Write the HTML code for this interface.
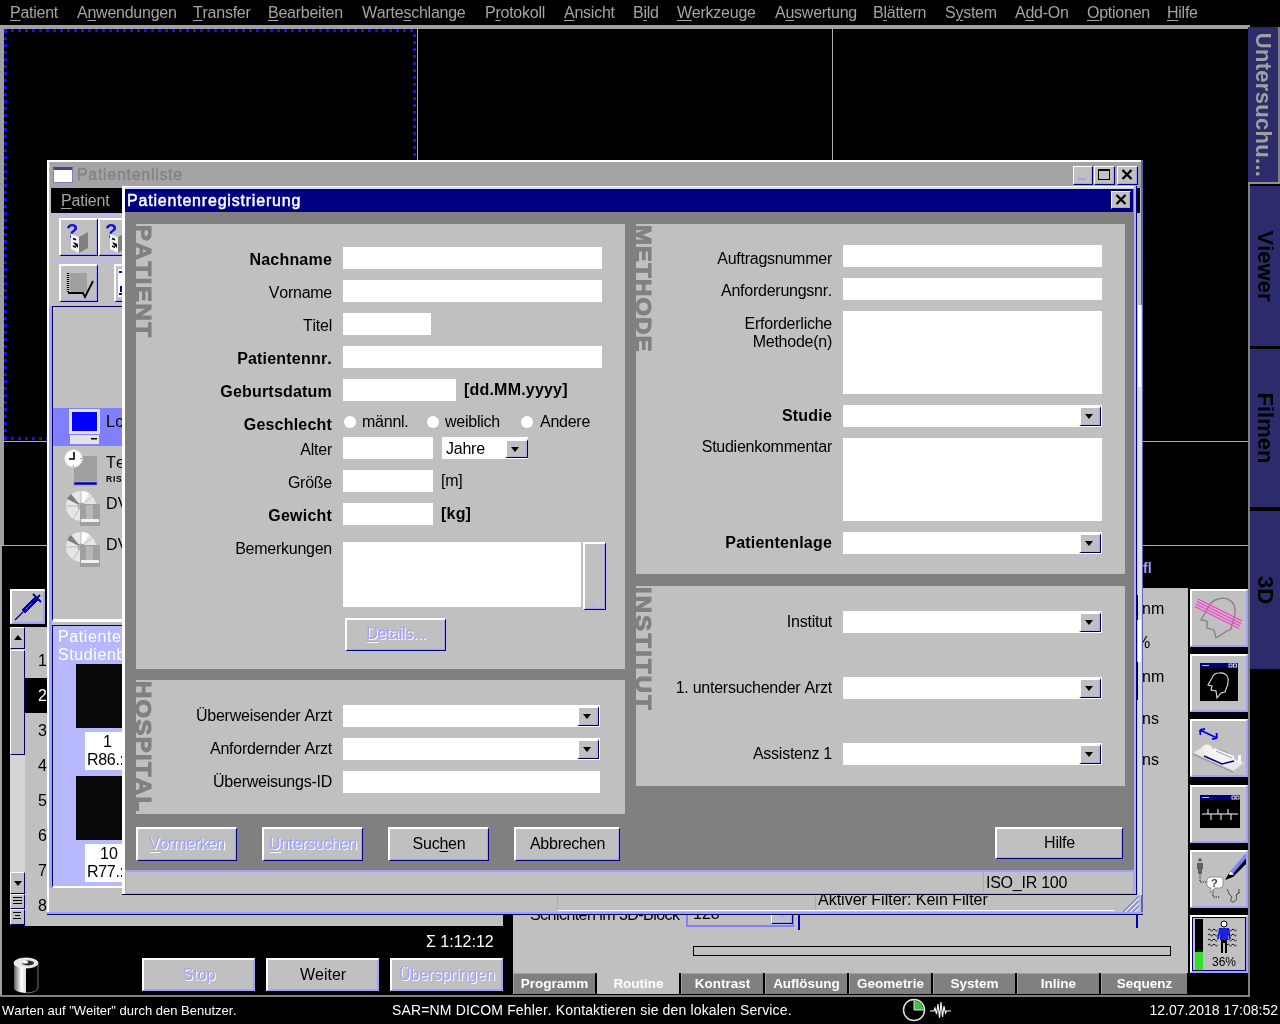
<!DOCTYPE html>
<html lang="de">
<head>
<meta charset="utf-8">
<title>Patientenregistrierung</title>
<style>
*{box-sizing:border-box;margin:0;padding:0}
html,body{width:1280px;height:1024px;overflow:hidden;background:#000}
body{position:relative;font-family:"Liberation Sans",sans-serif;font-size:16px;color:#000;line-height:1;font-kerning:none}
.a{position:absolute}
u{text-decoration:underline;text-underline-offset:2px;text-decoration-thickness:1px}
/* ---------- base app ---------- */
#dlg{letter-spacing:-0.25px}
#dlg,#plist,#base2,#menu{will-change:transform}
#dlg .b{letter-spacing:0.2px}
#menu{left:0;top:0;width:1280px;height:25px;background:#000;color:#a4a4a4;font-size:16px}
#menu span{position:absolute;top:5px;white-space:nowrap;letter-spacing:-0.25px}
.ln{background:#808080}
/* ---------- generic win controls ---------- */
.btn{background:#c0c0c0;border-top:2px solid #fff;border-left:2px solid #fff;border-right:1px solid #000080;border-bottom:1px solid #000080;box-shadow:inset -1px -1px 0 #a0a0ff;text-align:center;white-space:nowrap}
.dis{color:#a0a0ff;text-shadow:1px 1px 0 #fff}
.inp{background:#fff}
.lbl{text-align:right;white-space:nowrap;font-size:16px;letter-spacing:-0.25px;padding-right:0}
.lbl.b{letter-spacing:0.2px}
.b{font-weight:bold}
.dd{background:#c0c0c0;border-top:2px solid #fff;border-left:2px solid #fff;border-right:1px solid #000040;border-bottom:1px solid #000040;box-shadow:inset -2px -1px 0 #b0b0e8}
.dd:after{content:"";position:absolute;left:4px;top:6px;border:4.5px solid transparent;border-top:5px solid #000;border-bottom:0}
.vtab{left:1250px;width:30px;background:#2c2c6c;color:#000;font-weight:bold;font-size:22px}
.vtab span{position:absolute;left:50%;top:50%;white-space:nowrap;transform:translate(-50%,-50%) rotate(90deg)}
.ib{background:#c0c0c0;border:2px solid;border-color:#fff #a0a0ff #a0a0ff #fff}
.sb{background:#c0c0c0;border:1px solid;border-color:#fff #000060 #000060 #fff}
.sb i{position:absolute;left:3px;border:4px solid transparent}
.sb b{position:absolute;left:2px;width:9px;height:1px;background:#000}
.qn{left:25px;width:22px;text-align:right;font-size:16px}
.qb{top:958px;width:113px;height:33px;line-height:30px;border-color:#fff #a0a0ff #a0a0ff #fff}
.pu{left:1142px;font-size:16px}
.tb{top:0;height:21px;background:#808080;color:#fff;font-weight:bold;font-size:13.5px;text-align:center;line-height:19px;border-top:1px solid #a0a0a0;border-left:1px solid #a0a0a0}
.tb.on{background:#c0c0c0;border-color:#c0c0c0}
.tl{font-size:16px;white-space:nowrap;letter-spacing:0.3px}
.vt{transform-origin:0 0;transform:rotate(90deg) scaleX(1.08);white-space:nowrap;font-weight:bold;color:#808080;-webkit-text-stroke:1.1px #808080}
</style>
</head>
<body>
<!-- ================= BASE APPLICATION ================= -->
<div id="menu" class="a">
<span style="left:10px"><u>P</u>atient</span>
<span style="left:77px">A<u>n</u>wendungen</span>
<span style="left:193px"><u>T</u>ransfer</span>
<span style="left:268px"><u>B</u>earbeiten</span>
<span style="left:362px">Warte<u>s</u>chlange</span>
<span style="left:485px">P<u>r</u>otokoll</span>
<span style="left:564px"><u>A</u>nsicht</span>
<span style="left:633px">B<u>i</u>ld</span>
<span style="left:677px"><u>W</u>erkzeuge</span>
<span style="left:775px">A<u>u</u>swertung</span>
<span style="left:873px">B<u>l</u>ättern</span>
<span style="left:945px">S<u>y</u>stem</span>
<span style="left:1015px">A<u>d</u>d-On</span>
<span style="left:1087px"><u>O</u>ptionen</span>
<span style="left:1167px"><u>H</u>ilfe</span>
</div>
<div class="a" style="left:0;top:25px;width:1250px;height:4px;background:#a0a0a0"></div>
<div class="a" style="left:0;top:28px;width:4px;height:517px;background:#a0a0a0"></div><div class="a" style="left:0;top:545px;width:2px;height:450px;background:#a0a0a0"></div>
<!-- segment grid -->
<div class="a" style="left:417px;top:29px;width:1px;height:516px;background:#b0b0b0"></div>
<div class="a" style="left:832px;top:29px;width:1px;height:516px;background:#b0b0b0"></div>
<div class="a" style="left:4px;top:441px;width:1244px;height:1px;background:#b0b0b0"></div>
<div class="a" style="left:0;top:545px;width:1248px;height:1px;background:#b0b0b0"></div>
<div class="a" style="left:4px;top:29px;width:413px;height:3px;background:repeating-linear-gradient(90deg,#1010f0 0 3px,transparent 3px 7px)"></div>
<div class="a" style="left:4px;top:437px;width:413px;height:3px;background:repeating-linear-gradient(90deg,#1010f0 0 3px,transparent 3px 7px)"></div>
<div class="a" style="left:4px;top:30px;width:3px;height:409px;background:repeating-linear-gradient(180deg,#1010f0 0 3px,transparent 3px 7px)"></div>
<div class="a" style="left:413px;top:34px;width:3px;height:405px;background:repeating-linear-gradient(180deg,#1010f0 0 3px,transparent 3px 7px)"></div>

<!-- LAYERS -->
<div id="base2">
<!-- right tabs -->
<div class="a ln" style="left:1248px;top:182px;width:2px;height:815px"></div>
<div class="a vtab" style="left:1248px;width:32px;top:27px;height:155px;background:#2c2c6a;color:#a0a0a0;border-right:2px solid #808080"><span style="letter-spacing:0.3px">Untersuchu...</span></div>
<div class="a" style="left:1248px;top:182px;width:32px;height:2px;background:#909090"></div>
<div class="a vtab" style="top:186px;height:160px"><span>Viewer</span></div>
<div class="a vtab" style="top:349px;height:158px"><span>Filmen</span></div>
<div class="a vtab" style="top:511px;height:158px"><span>3D</span></div>
<!-- exam queue (lower-left) -->
<div class="a btn" style="left:10px;top:589px;width:35px;height:35px;border-color:#fff #a0a0ff #a0a0ff #fff"><svg class="a" style="left:0;top:0" width="32" height="32" viewBox="0 0 32 32"><path d="M3 29 L11 21" stroke="#000080" stroke-width="1.2"/><path d="M10 19 L23 6 L26 9 L13 22 Z" fill="#0000c0" stroke="#000080" stroke-width="1"/><path d="M21 3 L29 11 M25 7 L28 4" stroke="#000080" stroke-width="1.8"/><path d="M14 18 L20 12" stroke="#c0c0ff" stroke-width="1" stroke-dasharray="1 1"/></svg></div>
<div class="a" style="left:25px;top:627px;width:478px;height:299px;background:#c0c0c0"></div>
<div class="a" style="left:10px;top:627px;width:15px;height:267px;background:#d4d4d4"></div>
<div class="a sb" style="left:10px;top:627px;width:15px;height:22px"><i style="border-bottom:5px solid #000;border-top:0;top:7px"></i></div>
<div class="a sb" style="left:10px;top:650px;width:15px;height:105px"></div>
<div class="a sb" style="left:10px;top:872px;width:15px;height:22px"><i style="border-top:5px solid #000;border-bottom:0;top:8px"></i></div>
<div class="a sb" style="left:10px;top:894px;width:15px;height:15px"><b style="top:2px"></b><b style="top:5px"></b><b style="top:8px"></b></div>
<div class="a sb" style="left:10px;top:909px;width:15px;height:16px"><b style="top:2px;width:8px"></b><b style="top:5px;width:5px;left:4px"></b><b style="top:8px;width:8px"></b></div>
<div class="a" style="left:25px;top:678px;width:22px;height:35px;background:#000"></div>
<div class="a qn" style="top:653px">1</div><div class="a qn" style="top:688px;color:#fff">2</div><div class="a qn" style="top:723px">3</div><div class="a qn" style="top:758px">4</div><div class="a qn" style="top:793px">5</div><div class="a qn" style="top:828px">6</div><div class="a qn" style="top:863px">7</div><div class="a qn" style="top:898px">8</div>
<div class="a" style="left:426px;top:934px;color:#fff;white-space:nowrap">Σ 1:12:12</div>
<svg class="a" style="left:12px;top:955px" width="28" height="40" viewBox="0 0 28 40"><defs><linearGradient id="cg" x1="0" x2="1"><stop offset="0" stop-color="#606060"/><stop offset="0.3" stop-color="#fff"/><stop offset="0.55" stop-color="#d0d0d0"/><stop offset="0.7" stop-color="#303030"/><stop offset="1" stop-color="#000"/></linearGradient></defs><path d="M2 8 V33 A12 5 0 0 0 26 33 V8 Z" fill="url(#cg)"/><path d="M14 13 H26 V33 A12 5 0 0 1 14 38 Z" fill="#000"/><path d="M26 8 V33 A12 5 0 0 1 14 38" fill="none" stroke="#909090" stroke-width="0.8"/><ellipse cx="14" cy="8" rx="12" ry="5" fill="#e8e8e8" stroke="#fff" stroke-width="0.8"/><ellipse cx="16" cy="8" rx="6" ry="2.5" fill="#303030"/><ellipse cx="13" cy="7" rx="3" ry="1.5" fill="#fff"/></svg>
<div class="a btn dis qb" style="left:142px">Stop</div>
<div class="a btn qb" style="left:266px">Weiter</div>
<div class="a btn dis qb" style="left:390px">Überspringen</div>
<!-- parameter card (lower-right) -->
<div class="a" style="left:1143px;top:561px;color:#a0a0ff;font-weight:bold;font-size:14px">fl</div>
<div class="a" style="left:513px;top:588px;width:675px;height:385px;background:#c0c0c0"></div>
<div class="a pu" style="top:601px">nm</div><div class="a pu" style="top:635px;left:1136px">%</div><div class="a pu" style="top:669px">nm</div><div class="a pu" style="top:711px">ns</div><div class="a pu" style="top:752px">ns</div>
<div class="a" style="left:530px;top:907px;white-space:nowrap;letter-spacing:-0.55px">Schichten im 3D-Block</div>
<div class="a" style="left:686px;top:900px;width:108px;height:27px;border:2px solid #8080ff;border-top:0"><span class="a" style="left:5px;top:6px">128</span><div class="a btn" style="left:83px;top:3px;width:22px;height:21px;border-width:1px"><div class="a" style="left:7px;top:12px;width:5px;height:1px;background:#a0a0ff"></div></div></div>
<div class="a" style="left:798px;top:914px;width:2px;height:16px;background:#0000c0"></div>
<div class="a" style="left:1136px;top:914px;width:2px;height:14px;background:#0000c0"></div>
<div class="a" style="left:693px;top:946px;width:478px;height:10px;border:1px solid #000"></div>
<div class="a tabs" style="left:513px;top:973px;width:675px;height:22px;background:#000">
<div class="a tb" style="left:0;width:82px">Programm</div>
<div class="a tb on" style="left:84px;width:82px">Routine</div>
<div class="a tb" style="left:168px;width:82px">Kontrast</div>
<div class="a tb" style="left:252px;width:82px">Auflösung</div>
<div class="a tb" style="left:336px;width:82px">Geometrie</div>
<div class="a tb" style="left:420px;width:82px">System</div>
<div class="a tb" style="left:504px;width:82px">Inline</div>
<div class="a tb" style="left:588px;width:86px">Sequenz</div>
</div>
<!-- right icon column -->
<div class="a ib" style="left:1190px;top:589px;width:58px;height:58px"><svg class="a" style="left:0;top:0" width="54" height="54" viewBox="0 0 54 54"><path d="M26 8 C36 5 44 11 43 22 C43 28 40 31 39 38 L35 40 L24 47 L22 39 L15 37 L15 30 L9 29 L17 15 C19 11 22 9 26 8 Z" fill="none" stroke="#808080" stroke-width="1.3"/><g stroke="#ff38d8" stroke-width="1.3"><path d="M6 8 L50 30 M5 10.5 L49 32.5 M4 13 L48 35 M3 15.5 L47 37.5"/></g></svg></div>
<div class="a ib" style="left:1190px;top:654px;width:58px;height:58px"><svg class="a" style="left:0;top:0" width="54" height="54" viewBox="0 0 54 54"><rect x="8" y="7" width="38" height="38" fill="#000"/><rect x="8" y="7" width="38" height="5" fill="#000080"/><rect x="10" y="9" width="7" height="1" fill="#c0c0ff"/><rect x="37" y="8" width="3" height="3" fill="none" stroke="#fff" stroke-width="0.8"/><rect x="41.5" y="8" width="3" height="3" fill="none" stroke="#fff" stroke-width="0.8"/><path d="M27 17 C33 16 37 20 36 26 C36 30 34 32 33 36 L29 37 L25 42 L24 35 L19 34 L20 30 L16 29 L20 22 C21 19 24 17 27 17 Z" fill="none" stroke="#e0e0e0" stroke-width="1.1"/></svg></div>
<div class="a ib" style="left:1190px;top:719px;width:58px;height:58px"><svg class="a" style="left:0;top:0" width="54" height="54" viewBox="0 0 54 54"><path d="M8 9 L25 17 M8 9 L8.5 14 M8 9 L13 8 M25 17 L20 18 M25 17 L24.5 12" stroke="#0000e0" stroke-width="1.8" fill="none"/><path d="M1 32 L12 25 L52 42 L41 50 Z" fill="#e8e8e8"/><path d="M1 32 L41 50 L41 52 L1 34 Z" fill="#a0a0a0"/><ellipse cx="15" cy="27" rx="5" ry="3.5" fill="#f0f0f0"/><path d="M12 33 L22 27 L42 35 L42 41 L32 44 L12 36 Z" fill="#f4f4f4"/><path d="M12 35 L30 43 L42 40" stroke="#000080" stroke-width="1.5" fill="none"/><path d="M24 30 L40 37 M27 28 L36 32" stroke="#a0a0a0" stroke-width="1"/><rect x="46" y="34" width="3" height="8" fill="#f8f8f8"/></svg></div>
<div class="a ib" style="left:1190px;top:785px;width:58px;height:58px"><svg class="a" style="left:0;top:0" width="54" height="54" viewBox="0 0 54 54"><g transform="translate(0,2)"><rect x="8" y="6" width="40" height="33" fill="#000"/><rect x="8" y="6" width="40" height="5" fill="#000080"/><rect x="10" y="8" width="7" height="1" fill="#c0c0ff"/><rect x="40" y="7" width="3" height="3" fill="none" stroke="#fff" stroke-width="0.8"/><rect x="44" y="7" width="3" height="3" fill="none" stroke="#fff" stroke-width="0.8"/><path d="M10 25 H16 V20 M16 25 H19 V31 M19 25 H26 V20 M26 25 H29 V31 M29 25 H36 V20 M36 25 H39 V31 M39 25 H46" stroke="#fff" stroke-width="1" fill="none"/></g></svg></div>
<div class="a ib" style="left:1190px;top:850px;width:58px;height:58px"><svg class="a" style="left:0;top:0" width="54" height="54" viewBox="0 0 54 54"><circle cx="8" cy="8" r="1.8" fill="#606060"/><path d="M5 11 H11 V17 H10 V22 H6 V17 H5 Z" fill="#606060"/><path d="M8 23 V30 H15 M21 38 V45 H28" stroke="#000" stroke-width="1" stroke-dasharray="1.2 1.2" fill="none"/><path d="M19 25 H28 Q31 25 31 28 V33 Q31 36 28 36 H23 L18 41 L19 36 Q15 36 15 33 V28 Q15 25 19 25 Z" fill="#fff" stroke="#808080" stroke-width="0.8"/><text x="19" y="34.5" font-family="Liberation Sans" font-weight="bold" font-size="11" fill="#404040">?</text><path d="M33 28 L37 21 L55 3 L58 8 L41 25 Z" fill="#000"/><path d="M37 21 L53 2 L56 4 L40 23 Z" fill="#8080ff"/><path d="M36.5 22.5 L38.5 19.5 L42 23 Z" fill="#fff"/><path d="M35 37 Q37 43 40 45 Q37 50 41 50 Q46 49 44 43 Q48 41 47 37 M44 43 L48 40" stroke="#404040" stroke-width="0.9" fill="none"/></svg></div>
<div class="a ib" style="left:1190px;top:915px;width:58px;height:58px"><svg class="a" style="left:0;top:0" width="54" height="54" viewBox="0 0 54 54"><rect x="0.5" y="0.5" width="53" height="53" fill="none" stroke="#000060" stroke-width="1"/><rect x="3" y="2" width="8" height="51" fill="#000"/><rect x="3" y="35" width="8" height="18" fill="#30e030"/><circle cx="32" cy="7" r="3" fill="#fff" stroke="#000" stroke-width="1"/><path d="M27 11 H37 L39 22 L37 22 L36 16 V23 H28 V16 L27 22 L25 22 Z" fill="#2020e0"/><path d="M29 23 H35 V36 H33 V26 H31 V36 H29 Z" fill="#000"/><path d="M16 13 q1.2 -2 2.4 0 t2.4 0 t2.4 0 t2.4 0 M35 13 q1.2 -2 2.4 0 t2.4 0 t2.4 0 t2.4 0 M16 18 q1.2 -2 2.4 0 t2.4 0 t2.4 0 t2.4 0 M35 18 q1.2 -2 2.4 0 t2.4 0 t2.4 0 t2.4 0 M16 23 q1.2 -2 2.4 0 t2.4 0 t2.4 0 t2.4 0 M35 23 q1.2 -2 2.4 0 t2.4 0 t2.4 0 t2.4 0 M16 28 q1.2 -2 2.4 0 t2.4 0 t2.4 0 t2.4 0 M35 28 q1.2 -2 2.4 0 t2.4 0 t2.4 0 t2.4 0" stroke="#000" stroke-width="0.9" fill="none"/><text x="20" y="49" font-family="Liberation Sans" font-size="12" fill="#000">36%</text></svg></div>

<!-- status bar -->
<div class="a ln" style="left:0;top:995px;width:1250px;height:2px"></div>
<div class="a" style="left:0;top:997px;width:1280px;height:27px;background:#000;color:#fff;font-size:14px">
<span class="a" style="left:2px;top:7px;font-size:13px;white-space:nowrap">Warten auf "Weiter" durch den Benutzer.</span>
<span class="a" style="left:392px;top:6px;white-space:nowrap;letter-spacing:0.15px">SAR=NM DICOM Fehler. Kontaktieren sie den lokalen Service.</span>
<svg class="a" style="left:901px;top:0" width="52" height="27" viewBox="0 0 52 27"><circle cx="13" cy="13" r="10.5" fill="#000" stroke="#e0e0e0" stroke-width="1.5"/><path d="M13 13 V3.5 A9.5 9.5 0 0 1 22.5 13 Z" fill="#40c040"/><path d="M13 3 V13 H23" stroke="#e0e0e0" stroke-width="1" fill="none"/><path d="M29 14 H33 L34 11 L35.5 17 L37 7 L38.5 21 L40 5 L41.5 20 L43 9 L44.5 16 L45.5 14 H50" stroke="#fff" stroke-width="1.1" fill="none"/></svg>
<span class="a" style="right:2px;top:6px;white-space:nowrap">12.07.2018 17:08:52</span>
</div>
</div>
<div id="plist" class="a" style="left:47px;top:160px;width:1096px;height:755px;background:#c0c0c0">
<div class="a" style="left:0;top:0;width:1096px;height:2px;background:#fff"></div>
<div class="a" style="left:0;top:0;width:2px;height:754px;background:#fff"></div>
<div class="a" style="left:2px;top:146px;width:3px;height:582px;background:#a0a0ff"></div><div class="a" style="left:4px;top:53px;width:1px;height:93px;background:#b8b8ff"></div>
<div class="a" style="left:1094px;top:0;width:2px;height:754px;background:#6060b0"></div>
<div class="a" style="left:0;top:752px;width:1096px;height:2px;background:#a0a0ff"></div>
<div class="a" style="left:0;top:754px;width:1096px;height:1px;background:#000060"></div>
<!-- title bar (inactive) -->
<div class="a" style="left:3px;top:2px;width:1091px;height:26px;background:#a4a4a4"></div>
<div class="a" style="left:6px;top:7px;width:20px;height:16px;background:#fff;border:1px solid #8080c0;border-top:3px solid #4040a0;border-radius:1px"></div>
<div class="a" style="left:30px;top:7px;color:#848484;white-space:nowrap;letter-spacing:0.7px;-webkit-text-stroke:0.45px #848484">Patientenliste</div>
<div class="a btn" style="left:1026px;top:6px;width:20px;height:19px;border-width:1px"><div class="a" style="left:4px;top:11px;width:8px;height:2px;background:#a0a0ff"></div></div>
<div class="a btn" style="left:1047px;top:6px;width:21px;height:19px;border-width:1px"><div class="a" style="left:3px;top:2px;width:12px;height:11px;border:1px solid #000;border-top-width:2px"></div></div>
<div class="a btn" style="left:1070px;top:6px;width:21px;height:19px;border-width:1px"><svg class="a" style="left:3px;top:2px" width="12" height="11" viewBox="0 0 12 11"><path d="M1.5 1 L10.5 10 M10.5 1 L1.5 10" stroke="#000" stroke-width="2.2" fill="none"/></svg></div>
<!-- menu -->
<div class="a" style="left:4px;top:28px;width:1089px;height:25px;background:#000;color:#a4a4a4"><span class="a" style="left:10px;top:5px;letter-spacing:-0.2px"><u>P</u>atient</span></div>
<!-- toolbar -->
<div class="a" style="left:5px;top:54px;width:1087px;height:1px;background:#b8b8ff"></div>
<div class="a btn" style="left:12px;top:58px;width:39px;height:38px" id="tb1"><svg class="a" style="left:0;top:0" width="35" height="34" viewBox="0 0 35 34"><text x="5" y="18" font-family="Liberation Sans" font-weight="bold" font-size="20" fill="#1010e0">?</text><path d="M10 14 L18 17 L18 33 L10 29 Z" fill="#f4f4f4"/><path d="M18 17 L27 12 L27 28 L18 33 Z" fill="#808080"/><path d="M12 18.5 l3 1.2 M12 26 l3 1.2" stroke="#000" stroke-width="1.6"/><path d="M12 22 L17 24 L17 28 L14 25 Z" fill="#000"/></svg></div>
<div class="a btn" style="left:51px;top:58px;width:39px;height:38px" id="tb2"><svg class="a" style="left:0;top:0" width="35" height="34" viewBox="0 0 35 34"><text x="5" y="18" font-family="Liberation Sans" font-weight="bold" font-size="20" fill="#1010e0">?</text><path d="M10 14 L18 17 L18 33 L10 29 Z" fill="#f4f4f4"/><path d="M18 17 L27 12 L27 28 L18 33 Z" fill="#808080"/><path d="M12 18.5 l3 1.2 M12 26 l3 1.2" stroke="#000" stroke-width="1.6"/><path d="M12 22 L17 24 L17 28 L14 25 Z" fill="#000"/></svg></div>
<div class="a" style="left:5px;top:99px;width:1087px;height:2px;background:#b8b8ff"></div>
<div class="a btn" style="left:12px;top:104px;width:39px;height:38px" id="tb3"><svg class="a" style="left:0;top:0" width="35" height="34" viewBox="0 0 35 34"><rect x="9" y="7" width="17" height="19" fill="#a0a0a0"/><path d="M7 7 V27" stroke="#000" stroke-width="2.4" stroke-dasharray="1 1"/><path d="M7 27 H22 L24 31 L32 15" stroke="#000" stroke-width="1.8" fill="none"/></svg></div>
<div class="a btn" style="left:67px;top:104px;width:39px;height:38px" id="tb4"><div class="a" style="left:2px;top:3px;width:30px;height:28px;background:#fff"></div><div class="a" style="left:3px;top:5px;width:5px;height:2px;background:#0000c0"></div><div class="a" style="left:4px;top:20px;width:2px;height:6px;background:#0000c0"></div><div class="a" style="left:3px;top:27px;width:5px;height:2px;background:#0000c0"></div></div>
<!-- tree panel abs (53,306)-(..,619) -->
<div class="a" style="left:5px;top:146px;width:1080px;height:316px;background:#c0c0c0;border-top:1px solid #000060;border-left:1px solid #000060;border-bottom:3px solid #fff" id="tree">
<div class="a" style="left:0;top:101px;width:1079px;height:38px;background:#8080ff"></div>
<svg class="a" style="left:15px;top:101px" width="34" height="38" viewBox="0 0 34 38"><rect x="1" y="1" width="31" height="25" fill="#e4e4e4"/><rect x="4" y="4" width="25" height="19" fill="#0000ff"/><rect x="2" y="27" width="29" height="9" fill="#e4e4e4"/><rect x="23" y="30" width="6" height="1.5" fill="#000"/></svg>
<span class="a tl" style="left:53px;top:107px">Lo</span>
<svg class="a" style="left:11px;top:142px" width="36" height="38" viewBox="0 0 36 38"><rect x="10" y="7" width="23" height="25" fill="#a0a0a0"/><rect x="10" y="33" width="23" height="3" fill="#000080" stroke="#8080ff" stroke-width="0.8"/><circle cx="9.5" cy="9.5" r="9" fill="#fff" stroke="#d0d0d0" stroke-width="1"/><path d="M10 3 V10 H5" stroke="#000" stroke-width="1.6" fill="none"/><path d="M9.5 16.5 v1 M16.5 9.5 h1" stroke="#404040" stroke-width="1"/></svg>
<span class="a tl" style="left:53px;top:148px">Te</span><span class="a" style="left:53px;top:168px;font-size:8.5px;font-weight:bold;letter-spacing:0.8px">RIS</span>
<svg class="a" style="left:12px;top:183px" width="40" height="42" viewBox="0 0 40 42"><circle cx="16" cy="16" r="15" fill="#e6e6e6"/><path d="M16 16 L2 9 A15 15 0 0 1 6 4 Z" fill="#808080"/><path d="M16 16 L16 1 A15 15 0 0 1 24 3 Z" fill="#fff"/><path d="M16 16 L1 16 M16 16 L8 29 M16 16 L16 1 M16 16 L28 6" stroke="#b0b0b0" stroke-width="0.8"/><circle cx="16" cy="16" r="3" fill="#c0c0c0" stroke="#909090" stroke-width="0.8"/><rect x="15" y="14" width="20" height="18" fill="#a0a0a0"/><rect x="21" y="15" width="7" height="14" fill="#b8b8b8"/><rect x="16" y="29" width="18" height="3" fill="#f0f0f0"/><rect x="15" y="32" width="20" height="4" fill="#a0a0a0"/></svg>
<span class="a tl" style="left:53px;top:189px">DV</span>
<svg class="a" style="left:12px;top:224px" width="40" height="42" viewBox="0 0 40 42"><circle cx="16" cy="16" r="15" fill="#e6e6e6"/><path d="M16 16 L2 9 A15 15 0 0 1 6 4 Z" fill="#808080"/><path d="M16 16 L16 1 A15 15 0 0 1 24 3 Z" fill="#fff"/><path d="M16 16 L1 16 M16 16 L8 29 M16 16 L16 1 M16 16 L28 6" stroke="#b0b0b0" stroke-width="0.8"/><circle cx="16" cy="16" r="3" fill="#c0c0c0" stroke="#909090" stroke-width="0.8"/><rect x="15" y="14" width="20" height="18" fill="#a0a0a0"/><rect x="21" y="15" width="7" height="14" fill="#b8b8b8"/><rect x="16" y="29" width="18" height="3" fill="#f0f0f0"/><rect x="15" y="32" width="20" height="4" fill="#a0a0a0"/></svg>
<span class="a tl" style="left:53px;top:230px">DV</span>
</div>
<!-- thumbs panel abs (53,625)-(..,886) -->
<div class="a" style="left:5px;top:465px;width:1080px;height:263px;background:#b8b8ff;border-top:1px solid #000060;border-left:1px solid #000060;border-bottom:2px solid #fff;color:#fff" id="thumbs">
<div class="a" style="left:5px;top:2px;white-space:nowrap;letter-spacing:0.6px;line-height:18px">Patienten<br>Studienb</div>
<div class="a" style="left:23px;top:38px;width:64px;height:64px;background:#0a0a0a"></div>
<div class="a" style="left:32px;top:106px;width:55px;height:38px;background:#fff;color:#000"><span class="a" style="left:18px;top:2px">1</span><span class="a" style="left:2px;top:20px;white-space:nowrap;letter-spacing:-0.3px">R86.:</span></div>
<div class="a" style="left:23px;top:150px;width:64px;height:64px;background:#0a0a0a"></div>
<div class="a" style="left:32px;top:218px;width:55px;height:38px;background:#fff;color:#000"><span class="a" style="left:15px;top:2px">10</span><span class="a" style="left:2px;top:20px;white-space:nowrap;letter-spacing:-0.3px">R77.:</span></div>
</div>
<div class="a" style="left:1091px;top:145px;width:4px;height:590px;background:#dcdcdc"></div>
<div class="a" style="left:1091px;top:145px;width:3px;height:82px;background:#fff"></div>
<div class="a" style="left:1091px;top:460px;width:3px;height:42px;background:#fff"></div>
<div class="a" style="left:1090px;top:435px;width:1px;height:25px;background:#000"></div>
<div class="a" style="left:1090px;top:502px;width:1px;height:38px;background:#000"></div>
<!-- status bar -->
<div class="a" style="left:768px;top:735px;width:1px;height:16px;background:#a0a0ff"></div>
<div class="a" style="left:510px;top:735px;width:557px;height:16px;border-left:1px solid #a0a0ff;border-bottom:1px solid #fff;overflow:hidden"><span class="a" style="left:260px;top:-3px;white-space:nowrap">Aktiver Filter: Kein Filter</span></div>
<svg class="a" style="left:1074px;top:736px" width="18" height="16" viewBox="0 0 18 16"><path d="M2 16 L18 0 M7 16 L18 5 M12 16 L18 10" stroke="#8080ff" stroke-width="1.4" fill="none"/><path d="M4 16 L18 2 M9 16 L18 7 M14 16 L18 12" stroke="#fff" stroke-width="1" fill="none"/></svg>
</div>
<div id="dlg" class="a" style="left:122px;top:186px;width:1015px;height:709px;background:#808080">
<!-- frame -->
<div class="a" style="left:0;top:0;width:1015px;height:3px;background:#d8d8ff"></div>
<div class="a" style="left:0;top:0;width:1015px;height:1px;background:#fff"></div>
<div class="a" style="left:0;top:0;width:3px;height:709px;background:#fff"></div>
<div class="a" style="left:1012px;top:0;width:2px;height:709px;background:#b0b0f0"></div>
<div class="a" style="left:1014px;top:0;width:1px;height:709px;background:#000080"></div>
<!-- title -->
<div class="a" style="left:3px;top:3px;width:1008px;height:23px;background:#000080;color:#fff;font-size:16px"><span class="a" style="left:2px;top:4px;white-space:nowrap;letter-spacing:0.8px;-webkit-text-stroke:0.45px #fff">Patientenregistrierung</span>
<div class="a btn xb" style="left:986px;top:2px;width:20px;height:18px;border-width:1px"><svg class="a" style="left:3px;top:2px" width="12" height="11" viewBox="0 0 12 11"><path d="M1.5 1 L10.5 10 M10.5 1 L1.5 10" stroke="#000" stroke-width="2.2" fill="none"/></svg></div></div>

<!-- PATIENT panel : abs (136,224)-(625,669) -->
<div class="a pn" style="left:14px;top:38px;width:489px;height:445px;background:#c0c0c0;overflow:hidden">
<div class="a vt" style="left:18.3px;top:1px;font-size:22px;letter-spacing:1.6px">PATIENT</div>
</div>
<!-- HOSPITAL panel : abs (136,680)-(625,814) -->
<div class="a pn" style="left:14px;top:494px;width:489px;height:134px;background:#c0c0c0;overflow:hidden">
<div class="a vt" style="left:18.3px;top:1px;font-size:22px;letter-spacing:1.3px">HOSPITAL</div>
</div>
<!-- METHODE panel : abs (636,224)-(1125,574) -->
<div class="a pn" style="left:514px;top:38px;width:489px;height:350px;background:#c0c0c0;overflow:hidden">
<div class="a vt" style="left:18.3px;top:1px;font-size:22px;letter-spacing:1.2px">METHODE</div>
</div>
<!-- INSTITUT panel : abs (636,586)-(1125,786) -->
<div class="a pn" style="left:514px;top:400px;width:489px;height:200px;background:#c0c0c0;overflow:hidden">
<div class="a vt" style="left:18.3px;top:1px;font-size:22px;letter-spacing:2.1px">INSTITUT</div>
</div>
<div class="a lbl b" style="left:-90px;width:300px;top:64px;height:18px;line-height:20px">Nachname</div>
<div class="a inp" style="left:221px;top:61px;width:259px;height:22px"></div>
<div class="a lbl" style="left:-90px;width:300px;top:97px;height:18px;line-height:20px">Vorname</div>
<div class="a inp" style="left:221px;top:94px;width:259px;height:22px"></div>
<div class="a lbl" style="left:-90px;width:300px;top:130px;height:18px;line-height:20px">Titel</div>
<div class="a inp" style="left:221px;top:127px;width:88px;height:22px"></div>
<div class="a lbl b" style="left:-90px;width:300px;top:163px;height:18px;line-height:20px">Patientennr.</div>
<div class="a inp" style="left:221px;top:160px;width:259px;height:22px"></div>
<div class="a lbl b" style="left:-90px;width:300px;top:196px;height:18px;line-height:20px">Geburtsdatum</div>
<div class="a inp" style="left:221px;top:193px;width:113px;height:22px"></div>
<div class="a b" style="left:342px;top:194px;height:18px;line-height:20px;white-space:nowrap">[dd.MM.yyyy]</div>
<div class="a lbl b" style="left:-90px;width:300px;top:229px;height:18px;line-height:20px">Geschlecht</div>
<div class="a" style="left:222px;top:230px;width:12px;height:12px;border-radius:50%;background:#fff"></div>
<div class="a" style="left:240px;top:226px;height:18px;line-height:20px;white-space:nowrap">männl.</div>
<div class="a" style="left:305px;top:230px;width:12px;height:12px;border-radius:50%;background:#fff"></div>
<div class="a" style="left:323px;top:226px;height:18px;line-height:20px;white-space:nowrap">weiblich</div>
<div class="a" style="left:399px;top:230px;width:12px;height:12px;border-radius:50%;background:#fff"></div>
<div class="a" style="left:418px;top:226px;height:18px;line-height:20px;white-space:nowrap">Andere</div>
<div class="a lbl" style="left:-90px;width:300px;top:254px;height:18px;line-height:20px">Alter</div>
<div class="a inp" style="left:221px;top:251px;width:90px;height:22px"></div>
<div class="a inp" style="left:320px;top:251px;width:86px;height:22px"></div>
<div class="a" style="left:324px;top:253px;height:18px;line-height:20px;white-space:nowrap">Jahre</div>
<div class="a dd" style="left:383px;top:253px;width:23px;height:19px"></div>
<div class="a lbl" style="left:-90px;width:300px;top:287px;height:18px;line-height:20px">Größe</div>
<div class="a inp" style="left:221px;top:284px;width:90px;height:22px"></div>
<div class="a" style="left:319px;top:285px;height:18px;line-height:20px;white-space:nowrap">[m]</div>
<div class="a lbl b" style="left:-90px;width:300px;top:320px;height:18px;line-height:20px">Gewicht</div>
<div class="a inp" style="left:221px;top:317px;width:90px;height:22px"></div>
<div class="a b" style="left:319px;top:318px;height:18px;line-height:20px;white-space:nowrap">[kg]</div>
<div class="a lbl" style="left:-90px;width:300px;top:353px;height:18px;line-height:20px">Bemerkungen</div>
<div class="a inp" style="left:221px;top:356px;width:238px;height:65px"></div>
<div class="a btn" style="left:461px;top:356px;width:23px;height:68px"><span class="a dis" style="left:3px;bottom:0px;font-size:12px;text-shadow:none">...</span></div>
<div class="a btn dis" style="left:223px;top:432px;width:101px;height:33px;line-height:28px"><u>D</u>etails...</div>
<div class="a lbl" style="left:-90px;width:300px;top:520px;height:18px;line-height:20px">Überweisender Arzt</div>
<div class="a inp" style="left:221px;top:519px;width:257px;height:22px"></div>
<div class="a dd" style="left:455px;top:520px;width:22px;height:20px"></div>
<div class="a lbl" style="left:-90px;width:300px;top:553px;height:18px;line-height:20px">Anfordernder Arzt</div>
<div class="a inp" style="left:221px;top:552px;width:257px;height:22px"></div>
<div class="a dd" style="left:455px;top:553px;width:22px;height:20px"></div>
<div class="a lbl" style="left:-90px;width:300px;top:586px;height:18px;line-height:20px">Überweisungs-ID</div>
<div class="a inp" style="left:221px;top:585px;width:257px;height:22px"></div>
<div class="a lbl" style="left:410px;width:300px;top:63px;height:18px;line-height:20px">Auftragsnummer</div>
<div class="a inp" style="left:721px;top:59px;width:259px;height:22px"></div>
<div class="a lbl" style="left:410px;width:300px;top:95px;height:18px;line-height:20px">Anforderungsnr.</div>
<div class="a inp" style="left:721px;top:92px;width:259px;height:22px"></div>
<div class="a lbl" style="left:410px;width:300px;top:128px;height:18px;line-height:20px">Erforderliche</div>
<div class="a lbl" style="left:410px;width:300px;top:146px;height:18px;line-height:20px">Methode(n)</div>
<div class="a inp" style="left:721px;top:125px;width:259px;height:83px"></div>
<div class="a lbl b" style="left:410px;width:300px;top:220px;height:18px;line-height:20px">Studie</div>
<div class="a inp" style="left:721px;top:219px;width:259px;height:22px"></div>
<div class="a dd" style="left:957px;top:220px;width:22px;height:20px"></div>
<div class="a lbl" style="left:410px;width:300px;top:251px;height:18px;line-height:20px">Studienkommentar</div>
<div class="a inp" style="left:721px;top:252px;width:259px;height:83px"></div>
<div class="a lbl b" style="left:410px;width:300px;top:347px;height:18px;line-height:20px">Patientenlage</div>
<div class="a inp" style="left:721px;top:346px;width:259px;height:22px"></div>
<div class="a dd" style="left:957px;top:347px;width:22px;height:20px"></div>
<div class="a lbl" style="left:410px;width:300px;top:426px;height:18px;line-height:20px">Institut</div>
<div class="a inp" style="left:721px;top:425px;width:259px;height:22px"></div>
<div class="a dd" style="left:957px;top:426px;width:22px;height:20px"></div>
<div class="a lbl" style="left:410px;width:300px;top:492px;height:18px;line-height:20px">1. untersuchender Arzt</div>
<div class="a inp" style="left:721px;top:491px;width:259px;height:22px"></div>
<div class="a dd" style="left:957px;top:492px;width:22px;height:20px"></div>
<div class="a lbl" style="left:410px;width:300px;top:558px;height:18px;line-height:20px">Assistenz 1</div>
<div class="a inp" style="left:721px;top:557px;width:259px;height:22px"></div>
<div class="a dd" style="left:957px;top:558px;width:22px;height:20px"></div>
<div class="a btn dis" style="left:14px;top:641px;width:101px;height:34px;line-height:29px"><u>V</u>ormerken</div>
<div class="a btn dis" style="left:140px;top:641px;width:101px;height:34px;line-height:29px"><u>U</u>ntersuchen</div>
<div class="a btn" style="left:266px;top:641px;width:101px;height:34px;line-height:29px">Suc<u>h</u>en</div>
<div class="a btn" style="left:392px;top:641px;width:106px;height:34px;line-height:29px">Abbrechen</div>
<div class="a btn" style="left:873px;top:641px;width:128px;height:32px;line-height:27px">Hilfe</div>
<div class="a" style="left:3px;top:684px;width:1009px;height:24px;background:#c0c0c0;border:1px solid #a0a0ff;border-top-width:2px"></div>
<div class="a" style="left:861px;top:685px;width:150px;height:21px;border-left:1px solid #a0a0ff;border-top:1px solid #a0a0ff"><span class="a" style="left:2px;top:3px;white-space:nowrap">ISO_IR 100</span></div>
<div class="a" style="left:0;top:708px;width:1015px;height:1px;background:#000030"></div>
</div>
</body>
</html>
